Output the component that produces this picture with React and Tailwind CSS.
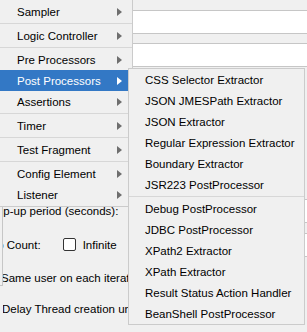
import React from 'react';

const mainGroups = [
  ['Sampler'],
  ['Logic Controller'],
  ['Pre Processors', 'Post Processors', 'Assertions'],
  ['Timer'],
  ['Test Fragment'],
  ['Config Element', 'Listener'],
];

const postGroups = [
  [
    'CSS Selector Extractor',
    'JSON JMESPath Extractor',
    'JSON Extractor',
    'Regular Expression Extractor',
    'Boundary Extractor',
    'JSR223 PostProcessor',
  ],
  [
    'Debug PostProcessor',
    'JDBC PostProcessor',
    'XPath2 Extractor',
    'XPath Extractor',
    'Result Status Action Handler',
    'BeanShell PostProcessor',
  ],
];

function Arrow({ active }) {
  return (
    <svg width="5" height="8" viewBox="0 0 5 8" className={active ? 'text-white' : 'text-[#6e6e6e]'}>
      <path d="M0 0L5 4L0 8Z" fill="currentColor" />
    </svg>
  );
}

function Separator() {
  return (
    <div className="py-px">
      <div className="h-px bg-[#d7d7d7]" />
    </div>
  );
}

function MainMenu() {
  return (
    <div className="absolute left-0 top-0 w-[133px] pt-px pb-px bg-[#f0f0f0] border-r border-b border-[#cbcbcb]">
      {mainGroups.map((group, gi) => (
        <div key={gi}>
          {gi > 0 && <Separator />}
          {group.map((label) => {
            const active = label === 'Post Processors';
            return (
              <div
                key={label}
                className={
                  'h-[21px] flex items-center justify-between pl-[17px] pr-[10px] ' +
                  (active ? 'bg-[#3378c5] text-white' : 'text-black')
                }
              >
                <span className="pt-[2px]">{label}</span>
                <Arrow active={active} />
              </div>
            );
          })}
        </div>
      ))}
    </div>
  );
}

function PostMenu() {
  return (
    <div className="absolute left-[128px] top-[68px] w-[177px] bg-[#f0f0f0] border border-[#cbcbcb]">
      {postGroups.map((group, gi) => (
        <div key={gi}>
          {gi > 0 && <Separator />}
          {group.map((label) => (
            <div key={label} className="h-[21px] flex items-center pl-[16px] pt-[2px] text-black whitespace-nowrap">
              {label}
            </div>
          ))}
        </div>
      ))}
    </div>
  );
}

function Field({ className = '' }) {
  return <div className={'h-[24px] bg-white border border-[#c6c6c6] ' + className} />;
}

export default function App() {
  return (
    <div className="relative w-[307px] h-[332px] overflow-hidden bg-[#f0f0f0] text-[11.5px] leading-none text-black font-['Liberation_Sans',Arial,sans-serif]">
      {/* Background: thread group form */}
      <div className="pt-[10px] pl-[100px] -mr-[10px]">
        <Field />
        <Field className="mt-[9px]" />
      </div>

      <div className="flex">
        <div className="w-[3px] h-[219px] shrink-0 border-r border-b border-[#c6c6c6]" />
        <div className="flex-1 min-w-0 overflow-hidden flex flex-col">
          <div className="mt-[132px] h-[23px] flex items-center">
            <span className="-ml-[24px] pt-[2px] whitespace-nowrap">Ramp-up period (seconds):</span>
            <Field className="ml-auto w-[190px] -mr-[20px]" />
          </div>
          <div className="mt-[11px] h-[23px] flex items-center">
            <span className="-ml-[25px] pt-[2px] whitespace-nowrap">Loop Count:</span>
            <span className="ml-[22px] w-[13px] h-[13px] shrink-0 bg-white border border-[#333] rounded-[2px]" />
            <span className="ml-[7px] pt-[2px]">Infinite</span>
            <Field className="ml-auto w-[160px] -mr-[20px]" />
          </div>
          <div className="mt-[10px] h-[23px] flex items-center">
            <span className="-ml-[2px] pt-[2px] whitespace-nowrap">Same user on each iteration</span>
          </div>
          <div className="mt-[8px] h-[23px] flex items-center">
            <span className="-ml-[1px] pt-[2px] whitespace-nowrap">Delay Thread creation until needed</span>
          </div>
        </div>
      </div>

      <MainMenu />
      <PostMenu />
    </div>
  );
}
